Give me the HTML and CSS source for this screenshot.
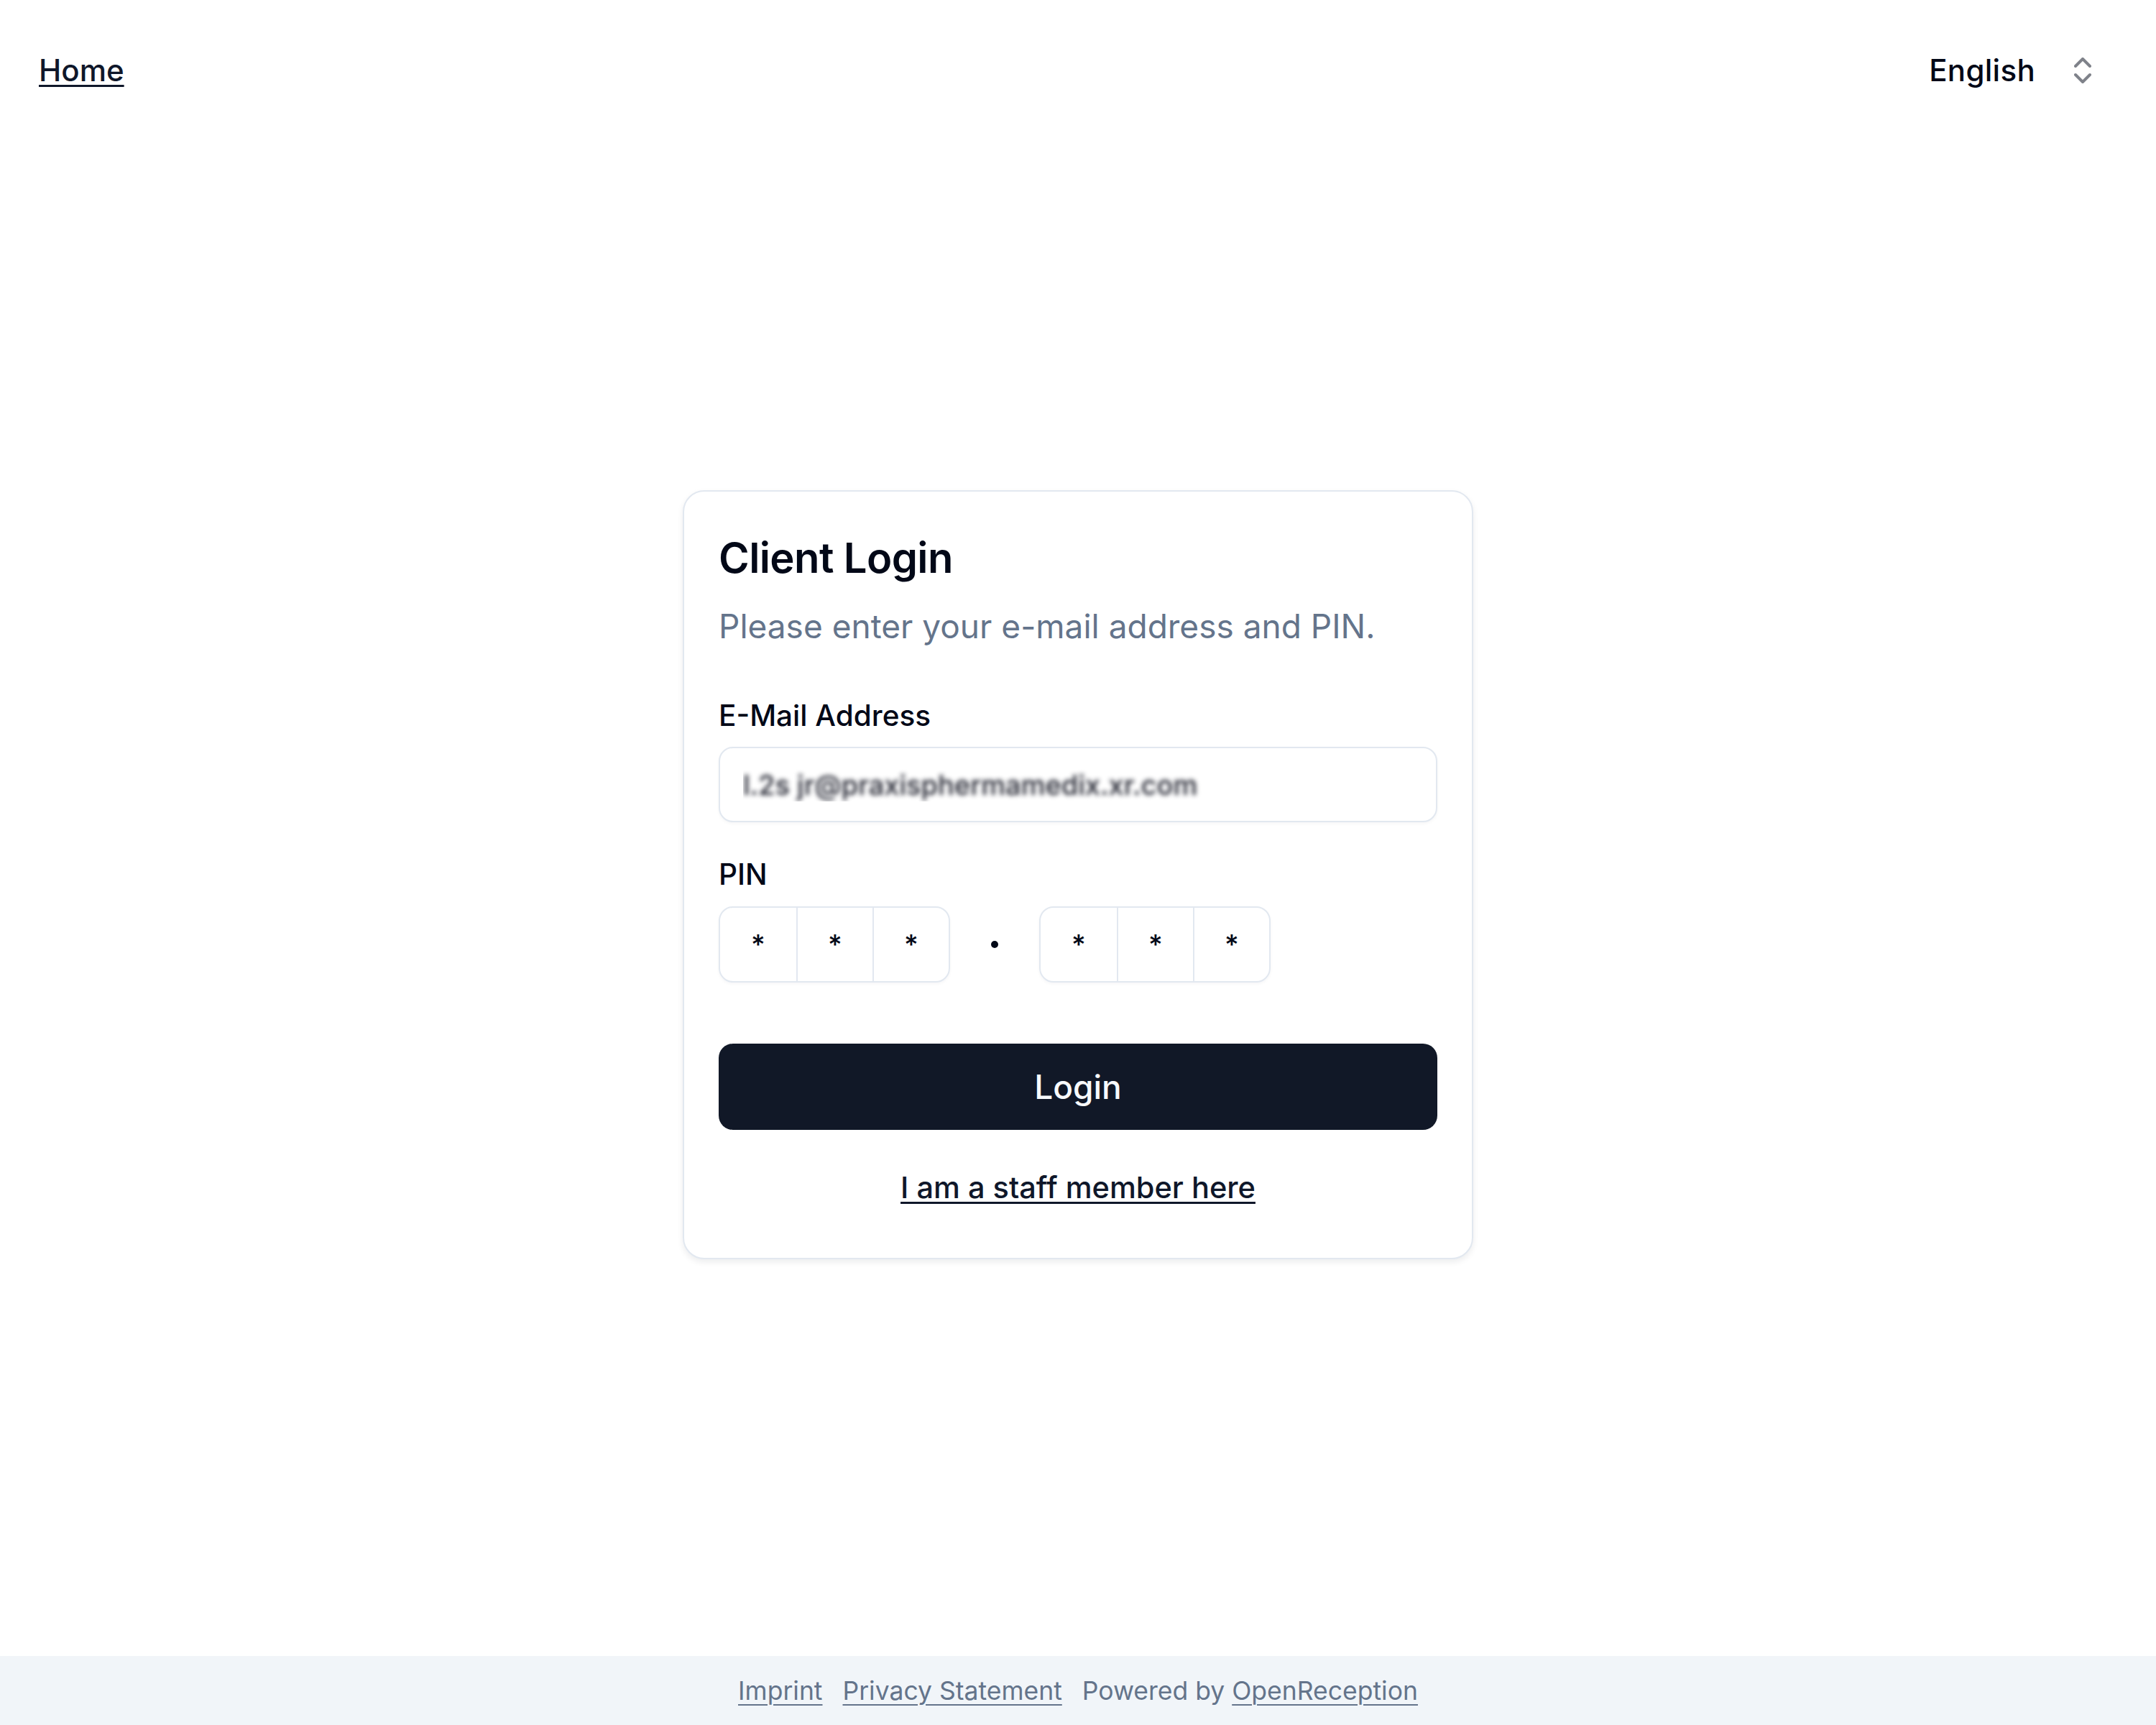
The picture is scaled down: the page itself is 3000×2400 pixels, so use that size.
FILE: index.html
```html
<!DOCTYPE html>
<html lang="en">
<head>
<meta charset="utf-8">
<title>Client Login</title>
<link rel="stylesheet" href="styles.css">
</head>
<body>
<div class="page">
  <header class="topbar">
    <a class="home-link" href="#">Home</a>
    <button class="lang-select" type="button">
      <span class="lang-label">English</span>
      <svg class="lang-icon" viewBox="0 0 24 24" fill="none" stroke="currentColor" stroke-width="2" stroke-linecap="round" stroke-linejoin="round"><path d="m7 15 5 5 5-5"/><path d="m7 9 5-5 5 5"/></svg>
    </button>
  </header>

  <main class="main">
    <section class="card">
      <h1 class="card-title">Client Login</h1>
      <p class="card-desc">Please enter your e-mail address and PIN.</p>
      <form class="form">
        <label class="label label-email" for="email">E-Mail Address</label>
        <input class="input" id="email" type="email" value="l.2s jr@praxisphermamedix.xr.com">
        <label class="label label-pin">PIN</label>
        <div class="pin">
          <div class="pin-group">
            <div class="pin-slot">*</div>
            <div class="pin-slot">*</div>
            <div class="pin-slot">*</div>
          </div>
          <div class="pin-sep"><span class="pin-dot"></span></div>
          <div class="pin-group">
            <div class="pin-slot">*</div>
            <div class="pin-slot">*</div>
            <div class="pin-slot">*</div>
          </div>
        </div>
        <button class="btn" type="button">Login</button>
        <a class="staff-link" href="#">I am a staff member here</a>
      </form>
    </section>
  </main>

  <footer class="footer">
    <a class="footer-link" href="#">Imprint</a>
    <a class="footer-link" href="#">Privacy Statement</a>
    <span class="footer-text">Powered by <a class="footer-link" href="#">OpenReception</a></span>
  </footer>
</div>
</body>
</html>
```

FILE: styles.css
```css
* {
  box-sizing: border-box;
}

html, body {
  margin: 0;
  padding: 0;
  background: #ffffff;
}

body {
  font-family: "Inter", "Noto Sans", "Liberation Sans", sans-serif;
  color: #020817;
}

.page {
  min-height: 2400px;
  display: flex;
  flex-direction: column;
}

/* Header */
.topbar {
  display: flex;
  justify-content: space-between;
  align-items: center;
  padding: 66px 54px 0 54px;
  height: 130px;
}

.home-link {
  font-size: 42px;
  line-height: 64px;
  font-weight: 500;
  color: #0f172a;
  text-decoration: underline;
  text-decoration-thickness: 3px;
  text-underline-offset: 5px;
}

.lang-select {
  display: flex;
  align-items: center;
  gap: 42px;
  background: transparent;
  border: none;
  padding: 0 24px 0 0;
  font-family: inherit;
  color: #020817;
  cursor: pointer;
}

.lang-label {
  font-size: 42px;
  line-height: 64px;
  font-weight: 500;
  letter-spacing: 0.3px;
}

.lang-icon {
  width: 48px;
  height: 48px;
  color: #020817;
  opacity: 0.5;
}

/* Main */
.main {
  flex: 1;
  display: flex;
  align-items: center;
  justify-content: center;
}

.card {
  width: 1100px;
  border: 2px solid #e2e8f0;
  border-radius: 30px;
  background: #ffffff;
  box-shadow: 0 4px 8px rgba(15, 23, 42, 0.08);
  padding: 63px 48px 77.5px 48px;
}

.card-title {
  margin: 0;
  font-size: 58px;
  line-height: 58px;
  font-weight: 600;
  letter-spacing: -0.6px;
  color: #020817;
}

.card-desc {
  margin: 33px 0 0 0;
  font-size: 46px;
  line-height: 66px;
  color: #64748b;
}

.form {
  display: flex;
  flex-direction: column;
}

.label {
  display: block;
  font-size: 40.5px;
  line-height: 39px;
  font-weight: 500;
  color: #020817;
}

.label-email {
  margin-top: 72px;
}

.input {
  margin-top: 24px;
  height: 105px;
  width: 100%;
  border: 2px solid #e2e8f0;
  border-radius: 20px;
  padding: 0 32px;
  font-family: inherit;
  font-size: 38px;
  font-weight: 500;
  color: transparent;
  text-shadow: 0 0 6px rgba(20, 22, 35, 0.95);
  background: #ffffff;
  box-shadow: 0 2px 4px rgba(15, 23, 42, 0.04);
  outline: none;
}

.label-pin {
  margin-top: 53px;
}

.pin {
  margin-top: 25px;
  display: flex;
  align-items: center;
}

.pin-group {
  display: flex;
  border: 2px solid #e2e8f0;
  border-radius: 20px;
  box-shadow: 0 2px 4px rgba(15, 23, 42, 0.04);
  overflow: hidden;
}

.pin-slot {
  width: 106px;
  height: 102px;
  display: flex;
  align-items: center;
  justify-content: center;
  font-size: 38px;
  font-weight: 500;
  color: #020817;
  border-left: 2px solid #e2e8f0;
}

.pin-slot:first-child {
  border-left: none;
}

.pin-sep {
  width: 124px;
  display: flex;
  justify-content: center;
  align-items: center;
}

.pin-dot {
  width: 10px;
  height: 10px;
  border-radius: 50%;
  background: #020817;
}

.btn {
  margin-top: 85px;
  height: 120px;
  width: 100%;
  border: none;
  border-radius: 20px;
  background: #111827;
  color: #f8fafc;
  font-family: inherit;
  font-size: 46px;
  font-weight: 500;
  cursor: pointer;
}

.staff-link {
  margin-top: 59.5px;
  align-self: center;
  font-size: 41.5px;
  line-height: 41px;
  font-weight: 500;
  color: #0f172a;
  text-decoration: underline;
  text-decoration-thickness: 3px;
  text-underline-offset: 5px;
}

/* Footer */
.footer {
  height: 96px;
  background: #f1f5f9;
  display: flex;
  justify-content: center;
  align-items: center;
  gap: 28px;
  font-size: 35.5px;
  color: #64748b;
}

.footer-link {
  color: #64748b;
  text-decoration: underline;
  text-decoration-thickness: 2px;
  text-underline-offset: 6px;
}

.footer-text {
  color: #64748b;
}
```
